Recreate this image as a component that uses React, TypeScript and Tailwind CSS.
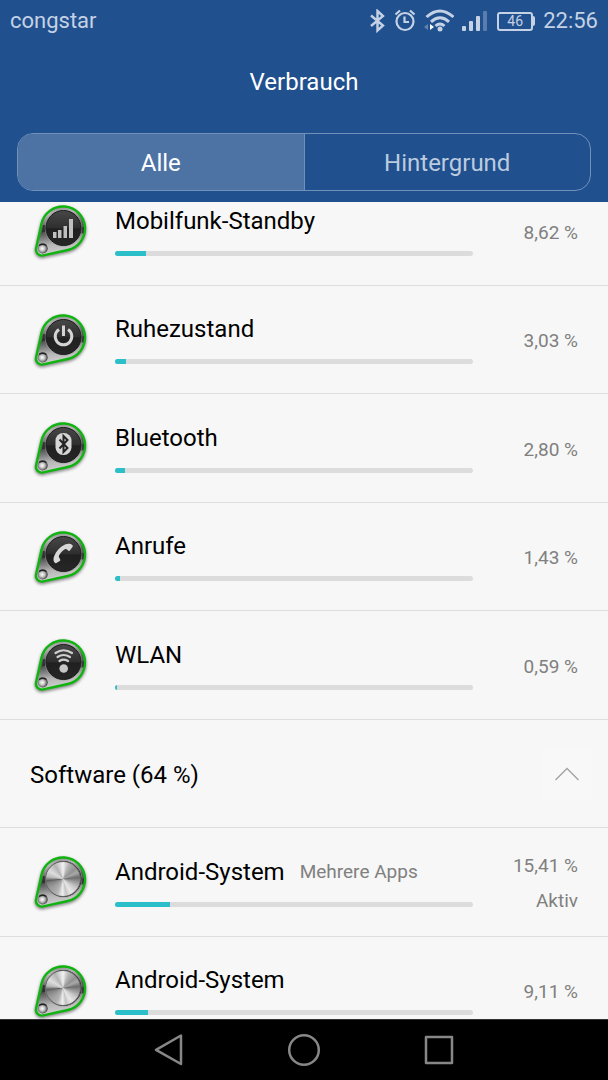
import { useState } from "react";
import clsx from "clsx";

type Glyph = "signal" | "power" | "bluetooth" | "phone" | "wifi" | "metal";

type Usage = {
  id: string;
  name: string;
  percent: number;
  glyph: Glyph;
  hint?: string;
  status?: string;
};

const hardware: Usage[] = [
  { id: "cell", name: "Mobilfunk-Standby", percent: 8.62, glyph: "signal" },
  { id: "idle", name: "Ruhezustand", percent: 3.03, glyph: "power" },
  { id: "bluetooth", name: "Bluetooth", percent: 2.8, glyph: "bluetooth" },
  { id: "calls", name: "Anrufe", percent: 1.43, glyph: "phone" },
  { id: "wlan", name: "WLAN", percent: 0.59, glyph: "wifi" },
];

const software: Usage[] = [
  {
    id: "system-shared",
    name: "Android-System",
    percent: 15.41,
    glyph: "metal",
    hint: "Mehrere Apps",
    status: "Aktiv",
  },
  { id: "system", name: "Android-System", percent: 9.11, glyph: "metal" },
];

const tabs = ["Alle", "Hintergrund"];

const rowClass = "odd:h-[109px] even:h-[108px] border-b border-[#dedede]";

function formatPercent(value: number) {
  return `${value.toFixed(2).replace(".", ",")} %`;
}

function BadgeGlyph({ glyph }: { glyph: Glyph }) {
  switch (glyph) {
    case "signal":
      return (
        <g fill="#c0c0c0">
          <rect x="23" y="31" width="3.5" height="6" />
          <rect x="28" y="29" width="3.5" height="8" />
          <rect x="33.500" y="25" width="3.500" height="12" />
          <rect x="39" y="18" width="4" height="19" />
        </g>
      );
    case "power":
      return (
        <g fill="none" stroke="#d4d4d4" strokeWidth="3">
          <path d="M29 19.500a8.300 8.300 0 1 0 9 0" />
          <path d="M33.500 15.500v10.500" />
        </g>
      );
    case "bluetooth":
      return (
        <>
          <rect x="25.500" y="15" width="16" height="22" rx="7.500" fill="#d6d6d6" />
          <path
            d="M29.500 21.500l8 8.500-4 4v-16l4 4-8 8.500"
            fill="none"
            stroke="#242424"
            strokeWidth="2"
          />
        </>
      );
    case "phone":
      return (
        <path
          d="M42.500 18.200c-2-1.900-5-1.900-7.500-.7-4.800 2.400-8.900 6.600-10.900 11.700-1 2.700-.8 5 .7 6.600.5.5 1 .5 1.600.2l3.400-1.900c.6-.4.7-.9.4-1.500l-1.300-2.700c-.2-.5-.1-.9.1-1.400 1.400-2.700 3.200-4.700 5.900-6.300.5-.3.9-.4 1.400-.1l2.200 1.600c.5.3 1 .3 1.400-.2l2.700-3.700c.4-.6.4-1.100-.1-1.600z"
          fill="#d8d8d8"
        />
      );
    case "wifi":
      return (
        <>
          <g fill="none" stroke="#cfcfcf" strokeWidth="2.200" strokeLinecap="round">
            <path d="M25.500 18q8-5.500 16.500 0" />
            <path d="M27.500 22q6-4 12.500 0" />
            <path d="M29.500 26q4-2.600 8.500 0" />
          </g>
          <circle cx="33.700" cy="33.500" r="4.300" fill="#c6c6c6" />
        </>
      );
    default:
      return null;
  }
}

function UsageBadge({ glyph, id }: { glyph: Glyph; id: string }) {
  const outline =
    "M11.500 22.800A22 22 0 1 1 37.700 49L13.300 54.400A6 6 0 0 1 6.100 47.200Z";

  return (
    <span className="relative block size-[60px] shrink-0">
      <svg viewBox="0 0 60 60" className="size-[60px]" aria-hidden="true">
        <defs>
          <linearGradient id={`${id}-rim`} x1="0" y1="0" x2="0.15" y2="1">
            <stop offset="0" stopColor="#777" />
            <stop offset="0.2" stopColor="#b9b9b9" />
            <stop offset="0.45" stopColor="#5c5c5c" />
            <stop offset="0.55" stopColor="#555" />
            <stop offset="0.8" stopColor="#b5b5b5" />
            <stop offset="1" stopColor="#d0d0d0" />
          </linearGradient>
          <linearGradient id={`${id}-face`} x1="0" y1="0" x2="0" y2="1">
            <stop offset="0" stopColor="#484848" />
            <stop offset="0.5" stopColor="#2e2e2e" />
            <stop offset="0.52" stopColor="#202020" />
            <stop offset="1" stopColor="#262626" />
          </linearGradient>
          <radialGradient id={`${id}-ball`} cx="0.45" cy="0.5">
            <stop offset="0" stopColor="#fff" />
            <stop offset="0.5" stopColor="#c4c4c4" />
            <stop offset="0.85" stopColor="#777" />
            <stop offset="1" stopColor="#444" />
          </radialGradient>
          <filter id={`${id}-shadow`} x="-20%" y="-20%" width="140%" height="140%">
            <feGaussianBlur stdDeviation="1.6" />
          </filter>
        </defs>
        <path
          d={outline}
          transform="translate(0 1.5)"
          fill="#444"
          stroke="#444"
          strokeWidth="3"
          opacity="0.6"
          filter={`url(#${id}-shadow)`}
        />
        <path
          d={outline}
          fill={`url(#${id}-rim)`}
          stroke="#0fb40f"
          strokeWidth="2.400"
        />
        <path d="M50 25l4 1.500-.5 6-5-.5zM13 24l3 .5v6l-4 1z" fill="#222" opacity="0.75" />
        <circle cx="12.700" cy="47.500" r="5" fill={`url(#${id}-ball)`} />
        <path d="M9 44.500q3.500-2.500 7.500 0" fill="none" stroke="#222" strokeWidth="1.300" />
        <circle cx="33.500" cy="27" r="18.800" fill="#999" opacity="0.6" />
        <circle
          cx="33.500"
          cy="27"
          r="17.500"
          fill={`url(#${id}-face)`}
          stroke="#1c1c1c"
        />
        <BadgeGlyph glyph={glyph} />
      </svg>
      {glyph === "metal" && (
        <span className="absolute top-[9px] left-[15px] size-9 rounded-full border border-[#666] bg-[conic-gradient(#f2f2f2_0deg,#b5b5b5_22deg,#929292_50deg,#a8a8a8_66deg,#6e6e6e_84deg,#8f8f8f_98deg,#c9c9c9_125deg,#e8e8e8_150deg,#c4c4c4_168deg,#eeeeee_182deg,#b4b4b4_202deg,#999999_235deg,#808080_255deg,#5e5e5e_264deg,#b9b9b9_278deg,#dedede_300deg,#b4b4b4_330deg,#f2f2f2_360deg)]" />
      )}
    </span>
  );
}

function UsageRow({ item }: { item: Usage }) {
  return (
    <li className={clsx(rowClass, "flex items-center pr-[30px] pl-[30px]")}>
      <UsageBadge glyph={item.glyph} id={item.id} />
      <div className="ml-[25px] min-w-0 flex-1">
        <div className="flex items-center gap-[15px]">
          <h2 className="text-[24px] leading-7 whitespace-nowrap text-black">
            {item.name}
          </h2>
          {item.hint && (
            <span className="text-[19px] leading-7 whitespace-nowrap text-[#808080]">
              {item.hint}
            </span>
          )}
        </div>
        <div className="mt-4 h-[5px] overflow-hidden rounded-full bg-[#dcdcdc]">
          <div
            className="h-full bg-[#2bbfc9]"
            style={{ width: `${item.percent}%` }}
          />
        </div>
      </div>
      <div className="w-[105px] shrink-0 pt-[2px] text-right text-[19px] leading-[35px] text-[#808080]">
        <p>{formatPercent(item.percent)}</p>
        {item.status && <p>{item.status}</p>}
      </div>
    </li>
  );
}

function StatusBar() {
  return (
    <div className="flex h-[42px] items-center justify-between px-[10px] text-[#c5d2e5]">
      <span className="text-[22px] leading-7">congstar</span>
      <div className="flex items-center gap-2">
        <svg viewBox="0 0 18 24" className="h-6 w-[18px]" fill="none" stroke="currentColor" strokeWidth="2.400" aria-hidden="true">
          <path d="M3 6.500l12 10-5.500 5V2l5.500 5L3 17" />
        </svg>
        <svg viewBox="0 0 22 24" className="h-6 w-[22px]" fill="none" stroke="currentColor" strokeWidth="2.200" aria-hidden="true">
          <circle cx="11" cy="12.500" r="8.500" />
          <path d="M10.500 7.500V13H15M1.500 5.500L6 1.500M20.500 5.500L16 1.500" />
        </svg>
        <svg viewBox="0 0 30 24" className="h-6 w-[30px]" fill="none" stroke="currentColor" strokeWidth="3" aria-hidden="true">
          <path d="M2.500 8q13.500-12 27 0M7 12.800q9-8 18 0M11.500 17q4.500-4 9 0" />
          <circle cx="16" cy="20" r="2.500" fill="currentColor" stroke="none" />
          <path d="M6 15v6l4-3z" fill="#fff" stroke="none" />
          <path d="M4 15v6l-4-3z" fill="currentColor" stroke="none" opacity="0.4" />
        </svg>
        <svg viewBox="0 0 25 24" className="h-6 w-[25px]" fill="currentColor" aria-hidden="true">
          <rect y="17" width="4" height="5" rx="1" />
          <rect x="7" y="12" width="4" height="10" rx="1" />
          <rect x="14" y="7" width="4" height="15" rx="1" />
          <rect x="21" y="2" width="4" height="20" rx="1" opacity="0.35" />
        </svg>
        <span className="ml-[2px] flex items-center">
          <span className="flex h-[19px] w-9 items-center justify-center rounded-[3px] border-2 border-current text-[14px] leading-none">
            46
          </span>
          <span className="h-[10px] w-[2px] rounded-r-sm bg-current" />
        </span>
        <span className="text-[22px] leading-7">22:56</span>
      </div>
    </div>
  );
}

function NavigationBar() {
  return (
    <nav className="flex h-[61px] shrink-0 items-center justify-center gap-[95px] border-t border-[#333] bg-black">
      <button type="button" aria-label="Zurück">
        <svg viewBox="0 0 40 40" className="size-10" fill="none" stroke="#878787" strokeWidth="2.500" strokeLinejoin="round">
          <path d="M32 5.500v28.500L7 19.800z" />
        </svg>
      </button>
      <button type="button" aria-label="Startseite">
        <svg viewBox="0 0 40 40" className="size-10" fill="none" stroke="#878787" strokeWidth="2.500">
          <circle cx="20" cy="20" r="14.800" />
        </svg>
      </button>
      <button type="button" aria-label="Letzte Apps">
        <svg viewBox="0 0 40 40" className="size-10" fill="none" stroke="#878787" strokeWidth="2.500" strokeLinejoin="round">
          <rect x="7" y="7" width="26" height="26" />
        </svg>
      </button>
    </nav>
  );
}

export default function App() {
  const [activeTab, setActiveTab] = useState("Alle");
  const [expanded, setExpanded] = useState(true);

  return (
    <div className="flex h-screen flex-col bg-[#f7f7f7] font-['Roboto',sans-serif]">
      <header className="shrink-0 bg-[#20508e] pb-[11px]">
        <StatusBar />
        <h1 className="py-[26px] text-center text-[24px] leading-7 text-white">
          Verbrauch
        </h1>
        <div
          role="tablist"
          className="mx-[17px] mt-[11px] flex h-[58px] overflow-hidden rounded-2xl border border-[#7191bb]"
        >
          {tabs.map((tab) => (
            <button
              key={tab}
              type="button"
              role="tab"
              aria-selected={activeTab === tab}
              onClick={() => setActiveTab(tab)}
              className={clsx(
                "flex-1 border-[#7191bb] pt-[2px] text-[24px] leading-7 not-first:border-l",
                activeTab === tab ? "bg-[#4d73a5] text-white" : "text-[#bccbdf]",
              )}
            >
              {tab}
            </button>
          ))}
        </div>
      </header>

      <main className="min-h-0 flex-1 overflow-hidden">
        <ul className="-mt-[25px]">
          {hardware.map((item) => (
            <UsageRow key={item.id} item={item} />
          ))}
          <li className={clsx(rowClass, "flex items-center justify-between pr-4 pl-[30px]")}>
            <h2 className="pt-[2px] text-[24px] leading-7 text-black">Software (64 %)</h2>
            <button
              type="button"
              aria-label="Software"
              aria-expanded={expanded}
              onClick={() => setExpanded(!expanded)}
              className="flex size-[50px] items-center justify-center bg-[#f8f8f8]"
            >
              <svg
                viewBox="0 0 26 14"
                className={clsx("h-[14px] w-[26px]", !expanded && "rotate-180")}
                fill="none"
                stroke="#a3a3a3"
                strokeWidth="1.300"
                aria-hidden="true"
              >
                <path d="M1.500 13L13 1.500 24.500 13" />
              </svg>
            </button>
          </li>
          {expanded && software.map((item) => <UsageRow key={item.id} item={item} />)}
        </ul>
      </main>

      <NavigationBar />
    </div>
  );
}
